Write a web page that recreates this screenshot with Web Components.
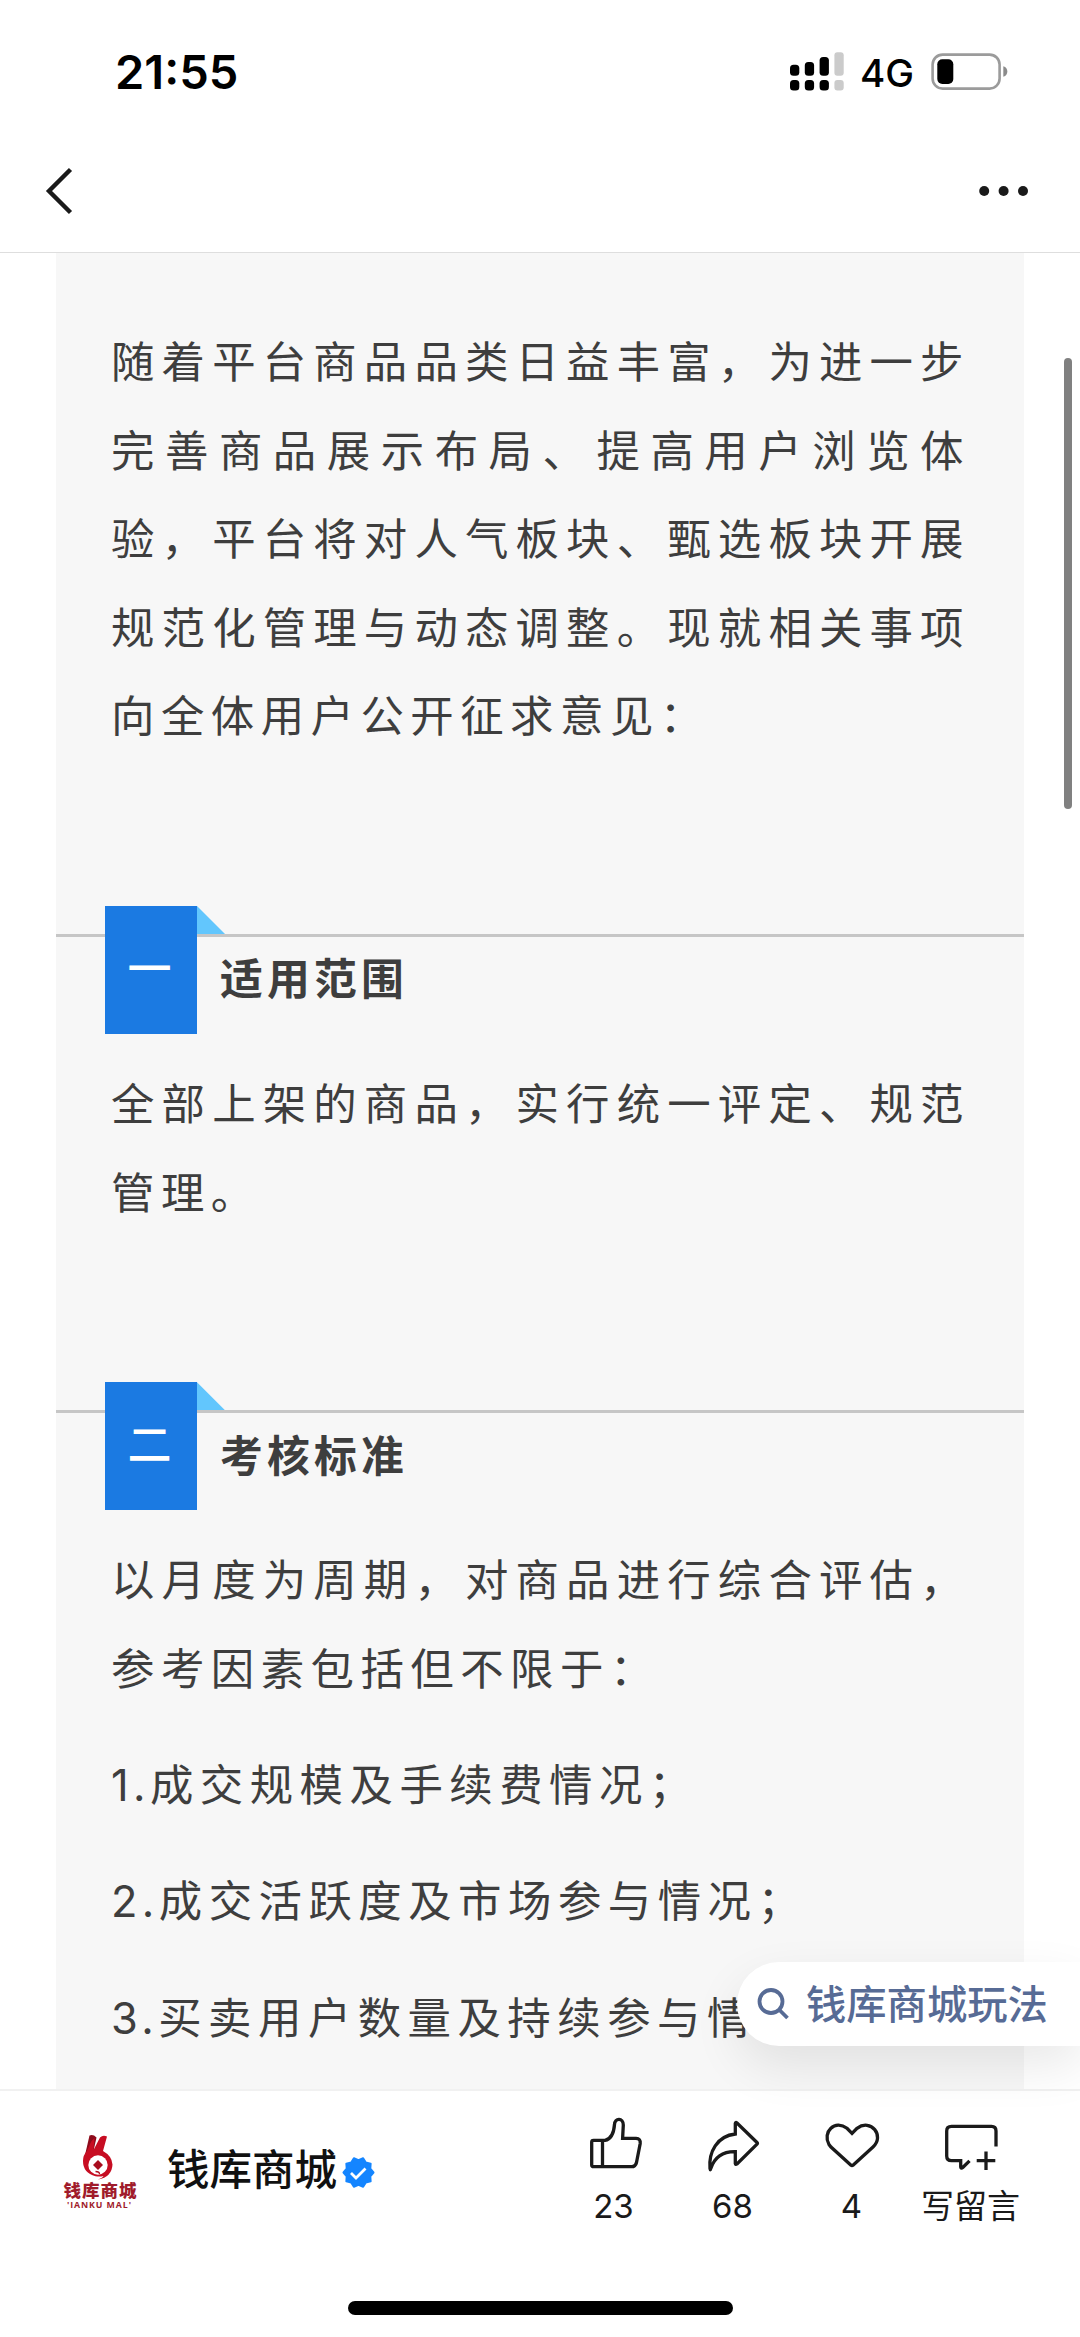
<!DOCTYPE html>
<html lang="zh-CN">
<head>
<meta charset="UTF-8">
<title>钱库商城</title>
<style>
    body {
        margin: 0;
        background: #fff;
        font-family: "Inter", "Noto Sans CJK SC", sans-serif;
        color: #3e3e3e;
    }
</style>
</head>
<body>

<article-page>
    <status-bar slot="top" time="21:55" network="4G"></status-bar>
    <nav-bar slot="top"></nav-bar>

    <text-block>随着平台商品品类日益丰富，为进一步完善商品展示布局、提高用户浏览体验，平台将对人气板块、甄选板块开展规范化管理与动态调整。现就相关事项向全体用户公开征求意见：</text-block>

    <section-heading number="一">适用范围</section-heading>
    <text-block>全部上架的商品，实行统一评定、规范管理。</text-block>

    <section-heading number="二">考核标准</section-heading>
    <text-block>以月度为周期，对商品进行综合评估，参考因素包括但不限于：</text-block>
    <text-block item="1.">成交规模及手续费情况；</text-block>
    <text-block item="2.">成交活跃度及市场参与情况；</text-block>
    <text-block item="3.">买卖用户数量及持续参与情</text-block>

    <search-pill slot="float">钱库商城玩法</search-pill>
    <account-bar slot="bottom" name="钱库商城">
        <action-button icon="like">23</action-button>
        <action-button icon="share">68</action-button>
        <action-button icon="heart">4</action-button>
        <action-button icon="comment">写留言</action-button>
    </account-bar>
</article-page>

<script>
class ArticlePage extends HTMLElement {
    constructor() {
        super();
        this.attachShadow({ mode: 'open' });
        this.shadowRoot.innerHTML = `
            <style>
                :host {
                    display: flex;
                    flex-direction: column;
                    width: 1080px;
                    height: 2337px;
                    overflow: hidden;
                    background: #fff;
                }
                main {
                    flex: 1;
                    min-height: 0;
                    position: relative;
                    padding: 0 56px;
                }
                .panel {
                    height: 100%;
                    box-sizing: border-box;
                    padding-top: 65px;
                    background: #f7f7f7;
                    overflow: hidden;
                }
                /* scroll indicator floats over the content */
                .scroll-thumb {
                    position: absolute;
                    top: 105px;
                    right: 8px;
                    width: 8.5px;
                    height: 451px;
                    border-radius: 4px;
                    background: #808080;
                }
            </style>
            <slot name="top"></slot>
            <main>
                <div class="panel"><slot></slot></div>
                <div class="scroll-thumb"></div>
                <slot name="float"></slot>
            </main>
            <slot name="bottom"></slot>
        `;
    }
}

class StatusBar extends HTMLElement {
    constructor() {
        super();
        this.attachShadow({ mode: 'open' });
    }

    connectedCallback() {
        this.shadowRoot.innerHTML = `
            <style>
                :host {
                    display: flex;
                    align-items: center;
                    justify-content: space-between;
                    height: 144px;
                    padding: 0 72px 0 115px;
                    color: #000;
                }
                .time { font-size: 47px; font-weight: 600; line-height: 60px; }
                .right { display: flex; align-items: center; }
                .network { font-size: 38.5px; font-weight: 500; line-height: 50px; margin: 2px 17px 0 16px; }
                svg { display: block; }
            </style>
            <span class="time">${this.getAttribute('time')}</span>
            <div class="right">
                <svg width="54" height="40" viewBox="0 0 54 40">
                    <g fill="#000">
                        <rect x="0" y="12.7" width="9.3" height="11" rx="3.5"/>
                        <rect x="14.8" y="10" width="9.3" height="13.7" rx="3.5"/>
                        <rect x="29.6" y="5" width="9.3" height="18.7" rx="3.5"/>
                        <rect x="0" y="28" width="9.3" height="10.5" rx="3.5"/>
                        <rect x="14.8" y="28" width="9.3" height="10.5" rx="3.5"/>
                        <rect x="29.6" y="28" width="9.3" height="10.5" rx="3.5"/>
                    </g>
                    <g fill="#cbcbcb">
                        <rect x="44.4" y="0.3" width="9.3" height="23.4" rx="3"/>
                        <rect x="44.4" y="28" width="9.3" height="10.5" rx="3"/>
                    </g>
                </svg>
                <span class="network">${this.getAttribute('network')}</span>
                <svg width="77" height="38" viewBox="0 0 77 38">
                    <rect x="1.6" y="1.6" width="67" height="34" rx="10" fill="none" stroke="#9b9b9b" stroke-width="2.6"/>
                    <rect x="6.3" y="6.2" width="16" height="24.8" rx="5" fill="#000"/>
                    <path d="M72.3 13.2c2.8.8 4 2.8 4 5.3s-1.2 4.5-4 5.3z" fill="#8b8b8b"/>
                </svg>
            </div>
        `;
    }
}

class NavBar extends HTMLElement {
    constructor() {
        super();
        this.attachShadow({ mode: 'open' });
        this.shadowRoot.innerHTML = `
            <style>
                :host {
                    display: flex;
                    align-items: center;
                    justify-content: space-between;
                    height: 109px;
                    padding: 0 51px 0 44px;
                    box-sizing: border-box;
                    border-bottom: 1px solid #dedede;
                }
                svg { display: block; margin-bottom: 14px; }
            </style>
            <svg width="30" height="50" viewBox="0 0 30 50" fill="none" stroke="#1a1a1a" stroke-width="4.4">
                <path d="M26.5 3.5L5 25l21.5 21.5"/>
            </svg>
            <svg width="50" height="12" viewBox="0 0 50 12" fill="#1a1a1a">
                <circle cx="5.2" cy="6" r="5"/><circle cx="24.6" cy="6" r="5"/><circle cx="44" cy="6" r="5"/>
            </svg>
        `;
    }
}

class TextBlock extends HTMLElement {
    constructor() {
        super();
        this.attachShadow({ mode: 'open' });
    }

    connectedCallback() {
        const marker = this.getAttribute('item');

        this.shadowRoot.innerHTML = `
            <style>
                :host { display: block; padding: 0 54px 0 55px; }
                :host([item]) { margin-top: 27.7px; }
                p {
                    margin: 0;
                    font-size: 43.4px;
                    line-height: 88.6px;
                    letter-spacing: 6.5px;
                    text-align: justify;
                }
                .marker { letter-spacing: 4.4px; }
            </style>
            <p>${marker ? `<span class="marker">${marker}</span>` : ''}<slot></slot></p>
        `;
    }
}

class SectionHeading extends HTMLElement {
    constructor() {
        super();
        this.attachShadow({ mode: 'open' });
    }

    connectedCallback() {
        this.shadowRoot.innerHTML = `
            <style>
                :host {
                    display: flex;
                    align-items: flex-start;
                    gap: 23px;
                    height: 123px;
                    margin-top: 173px;
                    padding-left: 49px;
                    border-top: 3px solid #c6c6c6;
                }
                .badge {
                    position: relative;
                    width: 92px;
                    height: 128px;
                    margin-top: -31px;
                    background: #1b7ae2;
                    color: #fff;
                    font-size: 44px;
                    font-weight: 500;
                    line-height: 127px;
                    text-align: center;
                    text-indent: -3px;
                }
                /* folded corner of the ribbon */
                .badge::after {
                    content: '';
                    position: absolute;
                    left: 100%;
                    top: 0;
                    width: 28px;
                    height: 28px;
                    background: #62c6fd;
                    clip-path: polygon(0 0, 100% 100%, 0 100%);
                }
                h2 {
                    margin: 0;
                    padding-top: 11.5px;
                    font-size: 42.8px;
                    font-weight: 700;
                    line-height: 64px;
                    letter-spacing: 4.2px;
                }
            </style>
            <div class="badge">${this.getAttribute('number')}</div>
            <h2><slot></slot></h2>
        `;
    }
}

class SearchPill extends HTMLElement {
    constructor() {
        super();
        this.attachShadow({ mode: 'open' });
        this.shadowRoot.innerHTML = `
            <style>
                :host {
                    position: absolute;
                    right: 0;
                    bottom: 43px;
                    display: flex;
                    align-items: center;
                    gap: 17px;
                    box-sizing: border-box;
                    width: 343px;
                    height: 84px;
                    padding-left: 20px;
                    border-radius: 42px 0 0 42px;
                    background: #fff;
                    box-shadow: 0 20px 50px rgba(0, 0, 0, 0.09);
                    color: #576b95;
                    font-size: 40.3px;
                    font-weight: 500;
                    line-height: 60px;
                    white-space: nowrap;
                }
                svg { margin-top: -1px; }
                span { padding-top: 2px; }
            </style>
            <svg width="32" height="32" viewBox="0 0 32 32" fill="none" stroke="currentColor" stroke-width="3.8">
                <circle cx="14" cy="13.5" r="11.5"/><path d="M22 21.5l8.5 8.5"/>
            </svg>
            <span><slot></slot></span>
        `;
    }
}

class AccountBar extends HTMLElement {
    constructor() {
        super();
        this.attachShadow({ mode: 'open' });
    }

    connectedCallback() {
        this.shadowRoot.innerHTML = `
            <style>
                :host {
                    display: flex;
                    flex-direction: column;
                    justify-content: space-between;
                    align-items: center;
                    box-sizing: border-box;
                    height: 248px;
                    padding-bottom: 22px;
                    border-top: 2px solid #f1f1f1;
                }
                .row {
                    display: flex;
                    justify-content: space-between;
                    align-items: flex-start;
                    width: 100%;
                    box-sizing: border-box;
                    padding: 23px 50px 0 62px;
                }
                .account { display: flex; align-items: center; padding-top: 17px; color: #111; }
                .name { margin-left: 27px; font-size: 42.5px; font-weight: 500; line-height: 60px; margin-top: -2px; }
                .verified { margin-left: 5px; margin-top: 2px; }
                svg { display: block; }
                .actions { display: flex; }
                .home { width: 385px; height: 14px; border-radius: 7px; background: #000; }
            </style>
            <div class="row">
                <div class="account">
                    <svg width="78" height="80" viewBox="0 0 78 80">
                        <path d="M27.5 4.5q3.5-1.5 7 2L31.5 20l-7 7-1.5-3z" fill="#8d0b1b"/>
                        <path d="M38 6.5q3-3 7-1L41 20q9 5 9.5 13.5Q50 46 36 48.5q5-2 5.5-3.5-4 1-8 .2Q21 42 21 30q0-6 4-10l3-7q2-4 4.5-6L31.5 19z" fill="#c70d22"/>
                        <circle cx="36" cy="34" r="9.7" fill="#fff"/>
                        <path d="M36 29l5 5-5 5-5-5z" fill="#a80c1d"/>
                        <path d="M33.5 40.5q4 0 4 2.5" fill="none" stroke="#b00d1f" stroke-width="1.3"/>
                        <text x="1.5" y="66" font-family="Noto Sans CJK SC, sans-serif" font-size="17.5" font-weight="900" fill="#a01b2b" textLength="73">钱库商城</text>
                        <text x="5" y="76.5" font-family="Open Sans, sans-serif" font-size="8.8" font-weight="700" fill="#a01b2b" textLength="64">'IANKU MAL'</text>
                    </svg>
                    <span class="name">${this.getAttribute('name')}</span>
                    <svg class="verified" width="33" height="33" viewBox="-16.5 -16.5 33 33">
                        <path id="seal" fill="#1485ff" stroke="#1485ff" stroke-width="2" stroke-linejoin="round"/>
                        <path d="M-7.5.5l5 5 9.5-9.5" fill="none" stroke="#fff" stroke-width="2.8"/>
                    </svg>
                </div>
                <div class="actions"><slot></slot></div>
            </div>
            <div class="home"></div>
        `;

        // scalloped seal around the check mark
        const points = [];
        for (let i = 0; i < 20; i++) {
            const r = i % 2 ? 15 : 12.4;
            const a = Math.PI * i / 10;
            points.push((r * Math.sin(a)).toFixed(2) + ' ' + (-r * Math.cos(a)).toFixed(2));
        }
        this.shadowRoot.getElementById('seal').setAttribute('d', 'M' + points.join('L') + 'z');
    }
}

const ACTION_ICONS = {
    like: '<path d="M8.5 26.3H20C27 25 29 17 29.5 10.5C29.7 3.5 38.3 3.5 38.3 11L37.6 24.3H51Q55.8 24.6 55.2 29.5L51.5 48.5Q50.5 52.7 46.5 52.7H8.5Q6.7 52.7 6.7 51V28Q6.7 26.3 8.5 26.3zM17.5 26.3V52.7"/>',
    share: '<path d="M31.3 9.5Q31.5 7.8 33 9L53 28.5Q53.8 29.3 53 30.2L33 50Q31.5 51 31.3 49.5V37.7C20 37.5 11 42 6.8 54.5Q6.3 57 6 54.5C4.5 38 13 22 31.3 20z"/>',
    heart: '<path d="M29 19.3L24 14.3C12 5 -1 18 6 30.5L8 33L28 51.2Q29 52 30 51.2L50 33C62 22 48 4 34 14.3z"/>',
    comment: '<path d="M54 32.5V17Q54 12.3 49.5 12.3H9.5Q4.7 12.3 4.7 17V42Q4.7 46.7 9.5 46.7H18.7V53Q19 55 20.8 53.5L27.5 46.8M44 37.5V56M34.7 46.7H53.3"/>'
};

class ActionButton extends HTMLElement {
    constructor() {
        super();
        this.attachShadow({ mode: 'open' });
    }

    connectedCallback() {
        this.shadowRoot.innerHTML = `
            <style>
                :host {
                    display: flex;
                    flex-direction: column;
                    align-items: center;
                    width: 119px;
                    color: #1a1a1a;
                    font-size: 33px;
                    line-height: 50px;
                }
                svg { display: block; }
                span { margin-top: 6.5px; }
            </style>
            <svg width="58" height="60" viewBox="0 0 58 60" fill="none" stroke="currentColor" stroke-width="3.3">
                ${ACTION_ICONS[this.getAttribute('icon')]}
            </svg>
            <span><slot></slot></span>
        `;
    }
}

customElements.define('article-page', ArticlePage);
customElements.define('status-bar', StatusBar);
customElements.define('nav-bar', NavBar);
customElements.define('text-block', TextBlock);
customElements.define('section-heading', SectionHeading);
customElements.define('search-pill', SearchPill);
customElements.define('account-bar', AccountBar);
customElements.define('action-button', ActionButton);
</script>
</body>
</html>
